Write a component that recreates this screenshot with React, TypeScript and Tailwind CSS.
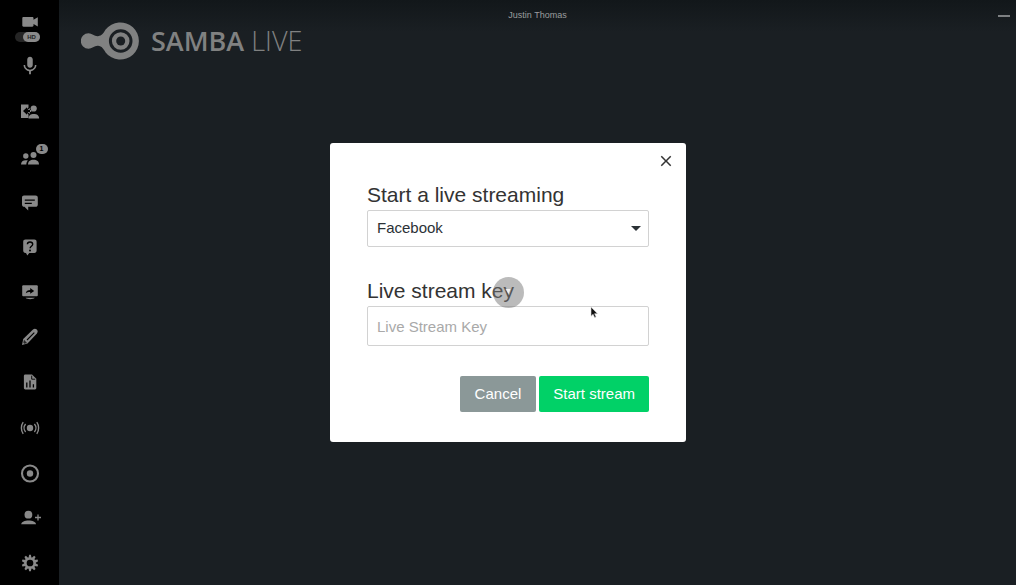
import { useState } from "react";
import type { ReactNode } from "react";
import { MdClose, MdMic } from "react-icons/md";

interface Tool {
  label: string;
  icon: ReactNode;
  badge?: number;
}

function Glyph({ children }: { children: ReactNode }) {
  return (
    <svg viewBox="0 0 24 24" className="size-6" fill="currentColor" aria-hidden="true">
      {children}
    </svg>
  );
}

const GEAR_TEETH = [0, 36, 72, 108, 144, 180, 216, 252, 288, 324];

const tools: Tool[] = [
  { label: "Microphone", icon: <MdMic className="size-[22px]" /> },
  {
    label: "Lobby",
    icon: (
      <Glyph>
        <path d="M3 5.500h7.500v3L6.800 12l3.700 3.500v3.500H3z" />
        <path d="M8.500 12l3.300-3v2h1.500v2h-1.500v2z" />
        <path d="M5 12l4-3.700v2.700h3v2H9v2.700z" fill="#000" />
        <circle cx="15.700" cy="9.500" r="3.100" />
        <path d="M10.500 19.500c0-3 2.300-4.400 5.300-4.400s5.300 1.400 5.300 4.400z" />
      </Glyph>
    ),
  },
  {
    label: "Participants",
    badge: 1,
    icon: (
      <Glyph>
        <circle cx="7.800" cy="12" r="2.700" />
        <circle cx="15.500" cy="10.900" r="3" />
        <path d="M3 20.500c0-2.900 2-4.300 4.800-4.300.8 0 1.500.1 2.100.4-.9.900-1.500 2.100-1.600 3.900z" />
        <path d="M10 20.500c0-3.300 2.200-4.800 5.500-4.800S21 17.200 21 20.500z" />
      </Glyph>
    ),
  },
  {
    label: "Chat",
    icon: (
      <Glyph>
        <path
          fillRule="evenodd"
          d="M6 5.500h11.500c1.400 0 2.300.9 2.300 2.300v6.700c0 1.400-.9 2.300-2.300 2.300H10.200V20.500L6.500 16.800H6.300c-1.400 0-2.300-.9-2.300-2.300V7.800C4 6.400 4.800 5.500 6 5.500zm.8 4v1.300h10V9.500zm0 3.300v1.300h7v-1.300z"
        />
      </Glyph>
    ),
  },
  {
    label: "Questions",
    icon: (
      <Glyph>
        <path d="M7.500 4.500h8.800c1.400 0 2.300.9 2.300 2.300v8.800c0 1.400-.9 2.300-2.300 2.300H11.300L9.300 20.500l-1.300-2.600h-.5c-1.400 0-2.300-.9-2.300-2.300V6.800c0-1.400.9-2.300 2.300-2.300z" />
        <path
          d="M9.400 9.300c0-1.500 1-2.300 2.600-2.300s2.700.8 2.700 2.200c0 2-2.600 2-2.600 4"
          fill="none"
          stroke="#000"
          strokeWidth="1.400"
        />
        <circle cx="12" cy="15.400" r="1" fill="#000" />
      </Glyph>
    ),
  },
  {
    label: "Share screen",
    icon: (
      <Glyph>
        <rect x="4.200" y="5.200" width="15.600" height="11" rx="1" />
        <path d="M7.800 13.200c.4-2.300 2-3.300 4.400-3.300V8l4 2.900-4 2.900v-1.900c-2 0-3.300.2-4.400 1.300z" fill="#000" />
        <path d="M7.500 17.800h9.300c-1 1-2.600 1.400-4.600 1.400s-3.700-.4-4.700-1.400z" />
      </Glyph>
    ),
  },
  {
    label: "Whiteboard",
    icon: (
      <Glyph>
        <path d="M4 20l1.200-6L15 4.500c1.200-1.100 2.700-1 3.800.1s1.200 2.600.1 3.800L9.500 18.600z" />
        <path d="M9 15l7.300-7.300" fill="none" stroke="#000" strokeWidth="1.100" />
        <path d="M6 14.800l3 3.200-2.700.7-1-1z" fill="#000" opacity=".7" />
      </Glyph>
    ),
  },
  {
    label: "Polls",
    icon: (
      <Glyph>
        <path d="M7.300 4.500H14l4.300 4.300v9.300c0 .8-.5 1.400-1.400 1.400H7.300c-.8 0-1.400-.5-1.400-1.400V5.900c0-.8.500-1.400 1.400-1.400z" />
        <path d="M8.800 12.500v5M12 10.500v7M15.400 14.300v3.200" stroke="#000" strokeWidth="1.300" />
        <path d="M13.700 5.700v3.500h3.500" fill="none" stroke="#000" strokeWidth=".9" />
      </Glyph>
    ),
  },
  {
    label: "Live stream",
    icon: (
      <Glyph>
        <circle cx="12" cy="13" r="3.200" />
        <path
          d="M7.600 9c-2 2.300-2 5.700 0 8M16.400 9c2 2.300 2 5.700 0 8M5.200 7.200c-2.400 3.300-2.400 8.300 0 11.600M18.800 7.200c2.400 3.300 2.400 8.300 0 11.600"
          fill="none"
          stroke="currentColor"
          strokeWidth="1.400"
        />
      </Glyph>
    ),
  },
  {
    label: "Record",
    icon: (
      <Glyph>
        <circle cx="12" cy="12.500" r="8" fill="none" stroke="currentColor" strokeWidth="2.100" />
        <circle cx="12" cy="12.500" r="3.200" />
      </Glyph>
    ),
  },
  {
    label: "Invite",
    icon: (
      <Glyph>
        <circle cx="10.400" cy="8.700" r="3.900" />
        <path d="M3.200 18.200c.4-2.700 3.500-3.800 7.400-3.800s7 1.100 7.400 3.800z" />
        <path d="M20 8.500v6M17 11.500h6" stroke="currentColor" strokeWidth="1.300" />
      </Glyph>
    ),
  },
  {
    label: "Settings",
    icon: (
      <Glyph>
        <circle cx="12" cy="12" r="4.600" fill="none" stroke="currentColor" strokeWidth="2.500" />
        {GEAR_TEETH.map((angle) => (
          <path key={angle} d="M10.500 7l.6-3.200h1.800l.6 3.200z" transform={`rotate(${angle} 12 12)`} />
        ))}
      </Glyph>
    ),
  },
];

function Sidebar() {
  return (
    <nav className="flex w-[59px] shrink-0 flex-col items-center bg-black pt-4 text-[#898989]">
      <button type="button" aria-label="Camera" className="flex h-3 items-center">
        <svg viewBox="0 0 16 10" className="h-[10px] w-4" fill="currentColor" aria-hidden="true">
          <path d="M1.500 0h8.800c.7 0 1.200.5 1.200 1.200v1.600L15.800.3v9.200l-4.300-2.500v1.600c0 .7-.5 1.200-1.200 1.200H1.500C.8 9.800.3 9.300.3 8.600V1.200C.3.5.8 0 1.500 0z" />
        </svg>
      </button>
      <button
        type="button"
        className="mt-1 mr-1 flex h-[10px] w-[25px] justify-end rounded-full bg-[#252525]"
      >
        <span className="w-[17px] rounded-full bg-[#8a8a8a] text-center text-[6px] leading-[10px] font-bold text-[#222]">
          HD
        </span>
      </button>
      <div className="flex grow flex-col justify-between pt-3 pb-[10px]">
        {tools.map((tool) => (
          <button
            key={tool.label}
            type="button"
            aria-label={tool.label}
            className="relative flex size-6 items-center justify-center"
          >
            {tool.icon}
            {tool.badge && (
              <span className="absolute top-0 left-[18px] h-[10px] w-3 rounded-full bg-[#898989] text-center text-[7px] leading-[10px] font-bold text-black">
                {tool.badge}
              </span>
            )}
          </button>
        ))}
      </div>
    </nav>
  );
}

function Logo() {
  return (
    <div className="flex items-center gap-3 text-[#808181]">
      <svg viewBox="0 0 58 38" className="h-[38px] w-[58px]" aria-hidden="true">
        <path
          d="M7.500 11.300c3.500 0 6 3.200 9.500 2.900 4-.4 5.500-3.200 7.600-6.600A18.600 18.600 0 1 1 24.600 30.400c-2.100-3.400-3.600-6.200-7.600-6.600-3.500-.3-6 2.900-9.500 2.900a7.700 7.700 0 0 1 0-15.400z"
          fill="currentColor"
        />
        <circle cx="39.700" cy="19" r="10.300" fill="none" stroke="#1a1f23" strokeWidth="3" />
        <circle cx="39.700" cy="19" r="4.500" fill="#1a1f23" />
      </svg>
      <span className="font-['Open_Sans',sans-serif] text-[27px] leading-9 font-light">
        <strong className="font-semibold">SAMBA</strong> LIVE
      </span>
    </div>
  );
}

function StreamDialog({ onClose }: { onClose: () => void }) {
  const [service, setService] = useState("facebook");
  const [streamKey, setStreamKey] = useState("");

  return (
    <form
      role="dialog"
      aria-label="Start a live streaming"
      onSubmit={(e) => e.preventDefault()}
      className="w-[356px] rounded-[3px] bg-white px-[37px] pt-1 pb-[30px] text-[15px] text-[#333]"
    >
      <div className="-mr-[31px] flex justify-end">
        <button type="button" aria-label="Close" onClick={onClose} className="p-1">
          <MdClose className="size-5 p-px" />
        </button>
      </div>

      <label htmlFor="service" className="mt-[5px] block text-[21px] leading-[30px]">
        Start a live streaming
      </label>
      <div className="relative">
        <select
          id="service"
          value={service}
          onChange={(e) => setService(e.target.value)}
          className="block h-[37px] w-full appearance-none rounded-xs border border-[#d2d2d2] bg-white px-[9px] text-[#2b3136]"
        >
          <option value="facebook">Facebook</option>
          <option value="youtube">YouTube</option>
        </select>
        <svg
          viewBox="0 0 10 5"
          className="pointer-events-none absolute top-4 right-2 h-[5px] w-[10px]"
          aria-hidden="true"
        >
          <path d="M0 0h10L5 5z" fill="#2b3136" />
        </svg>
      </div>

      <label htmlFor="stream-key" className="mt-[29px] block text-[21px] leading-[30px]">
        Live stream key
      </label>
      <input
        id="stream-key"
        type="text"
        placeholder="Live Stream Key"
        value={streamKey}
        onChange={(e) => setStreamKey(e.target.value)}
        className="block h-10 w-full rounded-xs border border-[#d2d2d2] px-[9px] placeholder:text-[#a9a9a9]"
      />

      <div className="mt-[30px] flex justify-end gap-[3px] text-white [text-shadow:0_0_1px_#fff]">
        <button
          type="button"
          onClick={onClose}
          className="h-9 rounded-xs bg-[#8b9898] px-[15px]"
        >
          Cancel
        </button>
        <button type="submit" className="h-9 rounded-xs bg-[#01d167] px-[14px]">
          Start stream
        </button>
      </div>
    </form>
  );
}

export default function App() {
  const [open, setOpen] = useState(true);

  return (
    <div className="relative flex min-h-screen bg-[#1a1f23] font-['Liberation_Sans',Arial,sans-serif]">
      <Sidebar />
      <main className="flex grow flex-col">
        <header className="grid h-8 grid-cols-3 items-center bg-linear-to-b from-[#12171a] to-[#1a1f23]">
          <span className="col-start-2 text-center text-[9px] text-[#9b9d9e]">
            Justin Thomas
          </span>
          <button
            type="button"
            aria-label="Minimize"
            className="mr-[6px] flex h-4 w-3 items-center justify-self-end"
          >
            <span className="h-[2px] w-full bg-[#7d8082]" />
          </button>
        </header>
        <div className="-mt-[10px] pl-[22px]">
          <Logo />
        </div>
      </main>

      {open && (
        <div className="absolute inset-0 flex items-center justify-center">
          <StreamDialog onClose={() => setOpen(false)} />
        </div>
      )}

      <div className="pointer-events-none absolute inset-0 flex items-center justify-center">
        <div className="flex size-[31px] items-center justify-center rounded-full bg-[#777]/50">
          <svg viewBox="0 0 8 10" className="h-[10px] w-2" aria-hidden="true">
            <path d="M1.500 1h5L4.500 6z" fill="#fff" opacity=".8" />
          </svg>
        </div>
      </div>
      <svg
        viewBox="0 0 10 14"
        className="pointer-events-none absolute top-[306px] left-[590px] h-[14px] w-[10px]"
        aria-hidden="true"
      >
        <path
          d="M1 1v9.200l2.100-1.900 1.500 3.300 1.500-.7-1.500-3.200h2.900z"
          fill="#111"
          stroke="#ddd"
          strokeWidth=".6"
        />
      </svg>
    </div>
  );
}
